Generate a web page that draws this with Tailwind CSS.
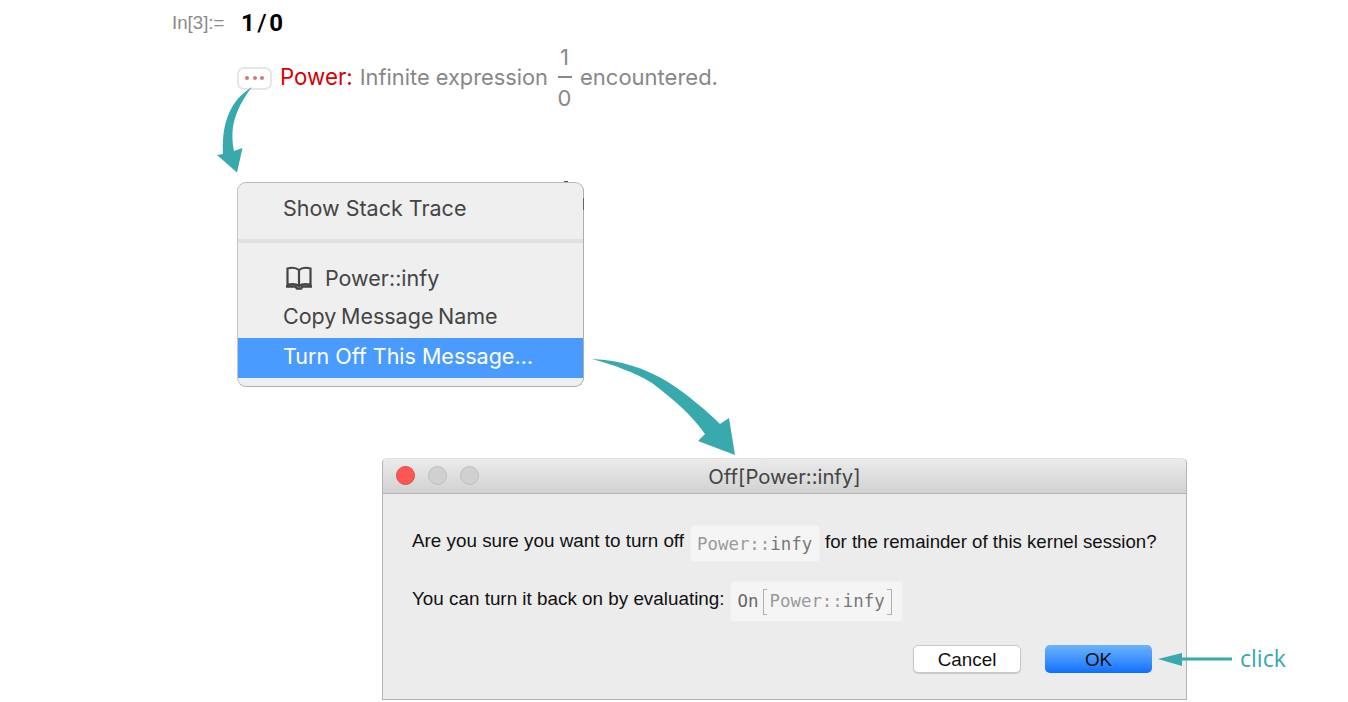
<!DOCTYPE html>
<html lang="en"><head><meta charset="utf-8"><title>Power::infy</title>
<script src="https://cdn.jsdelivr.net/npm/@tailwindcss/browser@4"></script></head>
<body class="bg-white">
<div class="relative w-[1348px] h-[702px] overflow-hidden bg-white font-['Inter',sans-serif] flex flex-col">

  <div class="flex items-center h-[46px] pl-[172px]">
    <span class="w-[69px] text-[18.700px] text-[#8a8a8a] font-['Liberation_Sans',sans-serif]">In[3]:=</span>
    <span class="text-[24px] font-bold text-black font-['Roboto',sans-serif] tracking-[0.5px]">1<span class="font-medium mx-[2px]">/</span>0</span>
  </div>

  <div class="flex items-center h-[64px] pl-[237px]">
    <div class="w-[35px] h-[23px] rounded-[7px] border-2 border-[#e6e6e6] flex items-center justify-center gap-[3.5px]">
      <span class="w-[4px] h-[4px] rounded-full bg-[#d0787b]"></span><span class="w-[4px] h-[4px] rounded-full bg-[#d0787b]"></span><span class="w-[4px] h-[4px] rounded-full bg-[#d0787b]"></span>
    </div>
    <span class="ml-[8px] pb-[2px] text-[22.300px] text-[#d90000]">Power:</span>
    <span class="ml-[7px] pb-[2px] text-[21.800px] text-[#888888]">Infinite expression</span>
    <span class="ml-[9px] w-[15px] flex flex-col items-center text-[22px] text-[#888888]">
      <span class="h-[38px] leading-[38px]">1</span><span class="w-[14px] h-[2px] bg-[#888888] shrink-0"></span><span class="h-[40px] leading-[40px]">0</span>
    </span>
    <span class="ml-[8px] pb-[2px] text-[22px] text-[#888888]">encountered.</span>
  </div>

  <div class="ml-[237px] mt-[72px] w-[347px] h-[205px] rounded-[9px] border border-[#aeaeae] border-l-[#c4c4c4] border-t-[#b8b8b8] bg-[#efefef] overflow-hidden flex flex-col text-[21.500px] text-[#444444]">
    <div class="h-[52px] pl-[45px] pb-[2px] flex items-center">Show Stack Trace</div>
    <div class="h-[4px] mt-[4px] bg-[#e0e0e0]"></div>
    <div class="h-[54px] pl-[47px] pt-[16px] flex items-center gap-[12px]">
      <svg width="28" height="24" viewBox="0 0 28 24" fill="none" stroke="#444444" stroke-width="2.200"><path d="M14 4C11 1.500 6 1.500 2.500 2.500V19C6 18 11 18 14 20C17 18 22 18 25.500 19V2.500C22 1.500 17 1.500 14 4ZM14 4V20"/><path d="M1 20.500H10.500L12 22.500H16L17.500 20.500H27" stroke-width="2.400"/></svg>
      <span>Power::infy</span>
    </div>
    <div class="h-[38px] pl-[45px] flex items-center [word-spacing:-1.500px]">Copy Message Name</div>
    <div class="h-[40px] pl-[45px] pb-[4px] flex items-center bg-[#4a9bff] text-white mt-[3px]">Turn Off This Message…</div>
  </div>

  <div class="ml-[382px] mt-[71px] w-[805px] h-[242px] rounded-t-[5px] border border-[#b4b4b4] border-t-[#e2e2e2] bg-[#ececec] flex flex-col">
    <div class="relative h-[35px] shrink-0 pt-[2px] bg-linear-to-b from-[#ebebeb] to-[#d2d2d2] border-b border-[#b3b3b3] rounded-t-[5px] flex items-center justify-center text-[20.300px] text-[#444444]">
      <div class="absolute left-[13px] top-[7px] flex gap-[13px]">
        <span class="w-[19px] h-[19px] rounded-full bg-[#fc5753] border border-[#e5483f]"></span>
        <span class="w-[19px] h-[19px] rounded-full bg-[#d0d0d0] border border-[#bfbfbf]"></span>
        <span class="w-[19px] h-[19px] rounded-full bg-[#d0d0d0] border border-[#bfbfbf]"></span>
      </div>
      Off[Power::infy]
    </div>
    <div class="flex-1 flex flex-col pl-[29px] pr-[34px] text-[18.850px] text-[#111111] font-['Liberation_Sans',sans-serif] whitespace-nowrap">
      <div class="flex items-center h-[37px] mt-[31px]">
        <span class="pb-[4px] shrink-0">Are you sure you want to turn off</span>
        <span class="ml-[6px] shrink-0 w-[130px] h-[37px] pl-[6px] pt-[2px] flex items-center rounded-[4px] bg-[#f5f5f5] border border-[#f0f0f0] font-['DejaVu_Sans_Mono',monospace] text-[17.400px] text-[#9a9a9a]">Power::<span class="text-[#777777]">infy</span></span>
        <span class="ml-[5px] pb-[4px] shrink-0 text-[18.650px]">for the remainder of this kernel session?</span>
      </div>
      <div class="flex items-center h-[41px] mt-[19px]">
        <span class="pb-[4px] shrink-0">You can turn it back on by evaluating:</span>
        <span class="ml-[5px] shrink-0 w-[173px] h-[41px] pl-[7px] flex items-center rounded-[4px] bg-[#f5f5f5] border border-[#f0f0f0] font-['DejaVu_Sans_Mono',monospace] text-[17.400px] text-[#9a9a9a]"><span class="text-[#666666]">On</span><span class="w-[4px] h-[26px] ml-[4px] mr-[3px] border-l border-t border-b border-[#b0b0b0] shrink-0"></span><span>Power::<span class="text-[#777777]">infy</span></span><span class="w-[5px] h-[26px] ml-[2px] border-r border-t border-b border-[#b0b0b0] shrink-0"></span></span>
      </div>
      <div class="flex justify-end items-center gap-[24px] mt-[23px]">
        <button class="w-[108px] h-[28px] rounded-[5px] bg-white border border-[#c9c9c9] shadow-[0_1px_1px_rgba(0,0,0,0.15)] text-[#111111]">Cancel</button>
        <button class="w-[107px] h-[28px] pt-[1px] rounded-[5px] bg-linear-to-b from-[#6cb3fc] to-[#076fff] text-[#111111]">OK</button>
      </div>
    </div>
  </div>

  <svg class="absolute inset-0 pointer-events-none" width="1348" height="702" viewBox="0 0 1348 702" fill="#38a9ac">
    <path d="M252 87C238 96 221 112 223 154L217 155L237 172.500L242.500 148L234 151C230 130 233 112 252 87Z"/>
    <path d="M592 359C620 360 645 368 668 382C688 395 708 412 720 424L729 418L735 455L698 441L705 434C692 415 672 398 652 383C640 375 615 365 592 359Z"/>
    <path d="M1158 659L1182 653V657.500H1232V660.500H1182V666Z"/>
    <rect x="564" y="181" width="4" height="1" fill="#555555"/>
    <rect x="583" y="198" width="1" height="12" fill="#666666"/>
  </svg>
  <span class="absolute left-[1240px] top-[643px] text-[23px] leading-[30px] text-[#38a9ac] font-['Open_Sans',sans-serif]">click</span>
</div>
</body></html>
